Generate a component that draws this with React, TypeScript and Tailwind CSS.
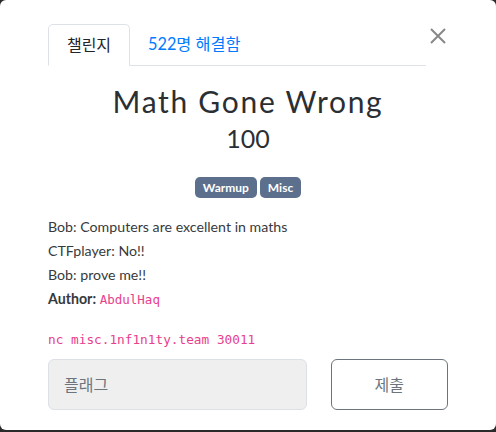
export default function App() {
  return (
    <div className="h-[432px] w-[496px] bg-[#2a2a2a]">
      <div className="h-[430px] w-[496px] rounded-md bg-white px-12 pt-6 font-['Lato','Noto_Sans_CJK_KR',sans-serif] text-[#212529]">
        <div className="flex items-start">
          <div className="flex flex-1 border-b border-[#dee2e6]">
            <div className="-mb-px flex h-[42px] w-[82px] items-center justify-center rounded-t-[5px] border border-b-white border-[#dee2e6] bg-white text-[16px] text-[#212529]">
              챌린지
            </div>
            <div className="flex h-[41px] items-center pl-[18px] text-[16.3px] text-[#007bff]">522명 해결함</div>
          </div>
          <button className="w-[22px] pl-[4px] pt-[4px] text-[#888]">
            <svg width="16" height="16" viewBox="0 0 16 16" stroke="currentColor" strokeWidth="2" fill="none">
              <path d="M1 1L15 15M15 1L1 15" />
            </svg>
          </button>
        </div>

        <h1 className="mt-[17px] text-center text-[30px] leading-[36px] font-normal tracking-[1.7px] text-[#2b2f33]">
          Math Gone Wrong
        </h1>
        <p className="mt-[4px] text-center text-[25px] leading-[30px] font-normal text-[#2b2f33]">100</p>

        <div className="mt-[24px] flex justify-center gap-[3px]">
          <span className="flex h-[21px] items-center rounded-[5px] bg-[#5c6f8c] px-[8px] text-[12px] font-bold text-white">
            Warmup
          </span>
          <span className="flex h-[21px] items-center rounded-[5px] bg-[#5c6f8c] px-[8px] text-[12px] font-bold text-white">
            Misc
          </span>
        </div>

        <div className="mt-[17px] text-[14.2px] leading-[24px] text-[#373a3c]">
          <p>Bob: Computers are excellent in maths</p>
          <p>CTFplayer: No!!</p>
          <p>Bob: prove me!!</p>
          <p>
            <span className="font-bold">Author:</span>{" "}
            <code className="font-['DejaVu_Sans_Mono',monospace] text-[12.5px] text-[#e83e8c]">AbdulHaq</code>
          </p>
        </div>

        <p className="mt-[20px] font-['DejaVu_Sans_Mono',monospace] text-[12.75px] leading-[16px] text-[#e83e8c]">
          nc misc.1nf1n1ty.team 30011
        </p>

        <div className="mt-[11px] flex gap-[24px]">
          <div className="flex h-[51px] w-[260px] items-center rounded-[6px] border border-[#dde0e5] bg-[#efefef] px-[15px] text-[16px] text-[#6c757d]">
            플래그
          </div>
          <button className="h-[51px] w-[118px] rounded-[6px] border border-[#6c757d] bg-white text-[16px] text-[#6c757d]">
            제출
          </button>
        </div>
      </div>
    </div>
  );
}
